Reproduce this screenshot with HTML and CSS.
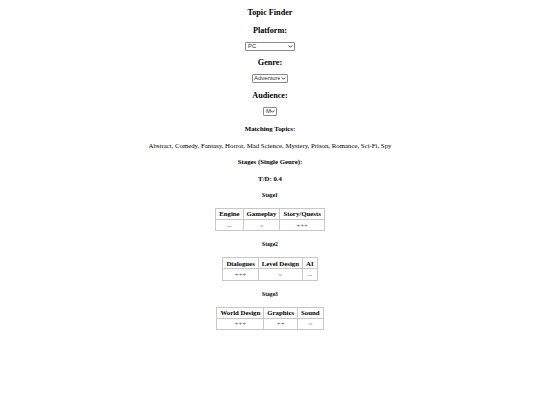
FILE: index.html
```html
<!DOCTYPE html>
<html>
<head>
<meta charset="utf-8">
<link rel="stylesheet" href="styles.css">
</head>
<body class="page">
<h3 class="title">Topic Finder</h3>
<h3 class="label">Platform:</h3>
<span class="sel-wrap"><select class="sel sel-platform"><option>PC</option></select><svg class="chev" viewBox="0 0 6 4" width="5" height="3"><path d="M0.6 0.6 L3 3 L5.4 0.6" fill="none" stroke="#222" stroke-width="1.1"/></svg></span>
<h3 class="label">Genre:</h3>
<span class="sel-wrap"><select class="sel sel-genre"><option>Adventure</option></select><svg class="chev" viewBox="0 0 6 4" width="5" height="3"><path d="M0.6 0.6 L3 3 L5.4 0.6" fill="none" stroke="#222" stroke-width="1.1"/></svg></span>
<h3 class="label">Audience:</h3>
<span class="sel-wrap"><select class="sel sel-aud"><option>M</option></select><svg class="chev" viewBox="0 0 6 4" width="5" height="3"><path d="M0.6 0.6 L3 3 L5.4 0.6" fill="none" stroke="#222" stroke-width="1.1"/></svg></span>
<h4 class="sub">Matching Topics:</h4>
<p class="topics">Abstract, Comedy, Fantasy, Horror, Mad Science, Mystery, Prison, Romance, Sci-Fi, Spy</p>
<h4 class="sub">Stages (Single Genre):</h4>
<h4 class="sub td">T/D: 0.4</h4>
<h5 class="stage">Stage1</h5>
<table class="grid">
<tr><th>Engine</th><th>Gameplay</th><th>Story/Quests</th></tr>
<tr><td>--</td><td>~</td><td>+++</td></tr>
</table>
<h5 class="stage">Stage2</h5>
<table class="grid">
<tr><th>Dialogues</th><th>Level Design</th><th>AI</th></tr>
<tr><td>+++</td><td>~</td><td>--</td></tr>
</table>
<h5 class="stage">Stage3</h5>
<table class="grid">
<tr><th>World Design</th><th>Graphics</th><th>Sound</th></tr>
<tr><td>+++</td><td>++</td><td>~</td></tr>
</table>
</body>
</html>
```
FILE: styles.css
```css
html { background: #fff; }
.page {
  margin: 3.5px;
  font-family: "Liberation Serif", "Times New Roman", serif;
  font-size: 6.8px;
  color: #000;
  text-align: center;
}
.title, .label {
  font-size: 8.2px;
  margin: 7.25px 0;
}
.title {
  margin: 4px 0 9px;
}
.sub {
  font-size: 6.8px;
  margin: 9.5px 0;
}
.sub.td {
  margin-top: 7.5px;
}
.topics {
  margin: 7px 0;
}
.stage {
  font-size: 5.6px;
  margin: 10px 0;
}
.sel-wrap {
  position: relative;
  display: inline-block;
  vertical-align: middle;
  line-height: 0;
}
.sel {
  -webkit-appearance: none;
  appearance: none;
  box-sizing: border-box;
  font-family: "Liberation Sans", Arial, sans-serif;
  font-size: 5.9px;
  color: #333;
  height: 9px;
  line-height: 7px;
  padding: 0 8px 0 2px;
  margin: 0;
  border: 1px solid #8a8a8a;
  border-radius: 1px;
  background: #fff;
  text-align: left;
}
.chev {
  position: absolute;
  right: 2px;
  top: 3px;
  pointer-events: none;
}
.sel-platform { width: 50px; }
.sel-genre { width: 36px; padding-right: 7px; padding-left: 1px; }
.sel-aud { width: 14px; padding-left: 2px; padding-right: 0; }
.grid {
  margin: 0 auto;
  border-collapse: collapse;
  font-size: 6.8px;
}
.grid th, .grid td {
  border: 1px solid #c8c8c8;
  padding: 1.6px 3px;
}
.grid td { color: #555; }
```
